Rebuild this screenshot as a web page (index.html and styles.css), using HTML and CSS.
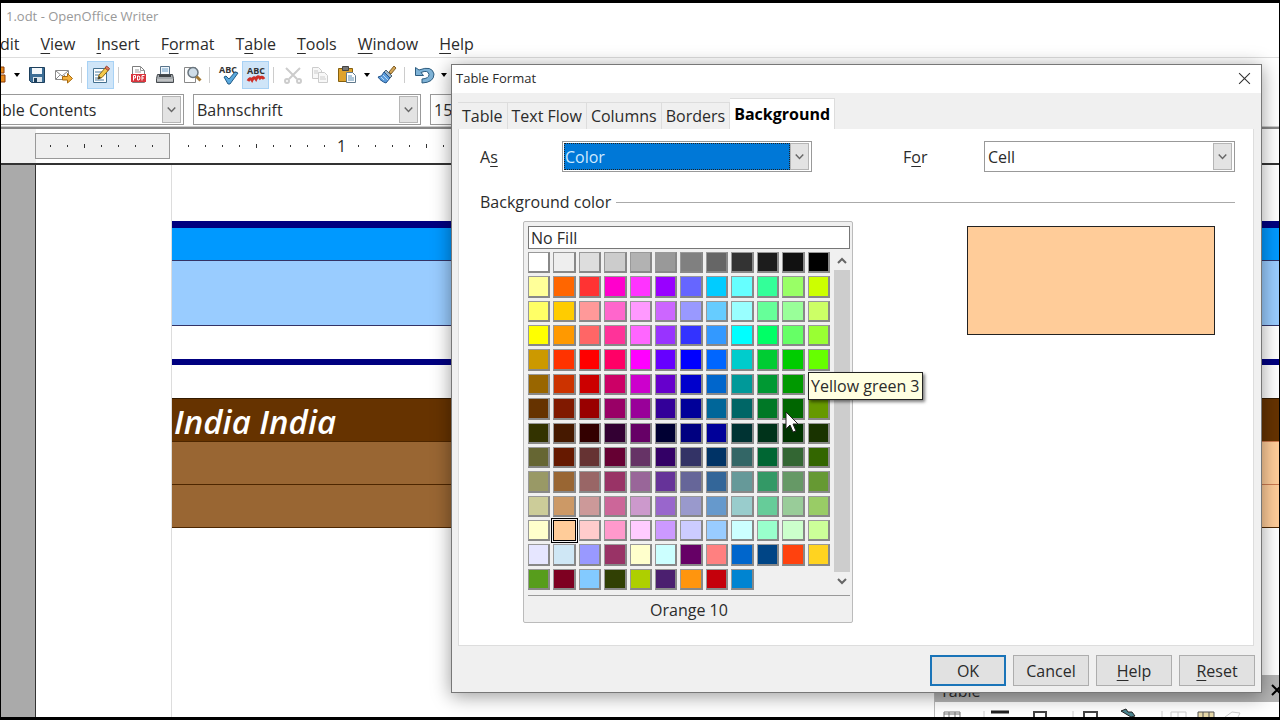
FILE: index.html
```
<!DOCTYPE html>
<html lang="en">
<head>
    <meta charset="UTF-8">
    <title>OpenOffice Writer</title>
    <link rel="stylesheet" href="styles.css">
    <script src="script.js" defer></script>
</head>
<body>
    <header class="titlebar">1.odt - OpenOffice Writer</header>
    <nav class="menubar">
        <a href="#">dit</a>
        <a href="#"><u>V</u>iew</a>
        <a href="#"><u>I</u>nsert</a>
        <a href="#">F<u>o</u>rmat</a>
        <a href="#">T<u>a</u>ble</a>
        <a href="#"><u>T</u>ools</a>
        <a href="#"><u>W</u>indow</a>
        <a href="#"><u>H</u>elp</a>
    </nav>

    <div class="toolbar">
        <button class="tool cut-off" aria-label="Open"><svg viewBox="0 0 9 20"><path d="M-3 2h6v6h-6zM-3 10h7v7h-7z" fill="#e88a1a" stroke="#8a3c0a"/></svg></button>
        <button class="caret" aria-label="Open recent"></button>
        <button class="tool" aria-label="Save"><svg viewBox="0 0 20 20"><path d="M2.500 2.500h15v15h-13l-2-2z" fill="#3d6e96" stroke="#1d3f5c"/><path d="M5 3h10v6H5z" fill="#f4f8fb"/><path d="M6 12h9v5H6z" fill="#dbe5ec"/><path d="M7 13h3v4H7z" fill="#1d3f5c"/></svg></button>
        <button class="tool" aria-label="E-mail document"><svg viewBox="0 0 20 20"><path d="M1.500 5.500h13v9h-13z" fill="#fff" stroke="#8a8a8a"/><path d="M2 6l6 5 6-5M2 14l4-4M14 14l-4-4" fill="none" stroke="#8a8a8a"/><path d="M8.500 11.500h5v-3l5 5-5 4.500v-3h-5z" fill="#f4b13c" stroke="#a8690c"/></svg></button>
        <span class="sep"></span>
        <button class="tool on" aria-label="Edit file"><svg viewBox="0 0 20 20"><path d="M2.500 3.500h13v14h-13z" fill="#fff" stroke="#44708f"/><path d="M4 7h7M4 10h5M4 13h3M4 15h9" stroke="#4a7da1"/><path d="M7 14l1-4 7-8 3 2.500-7 8z" fill="#f3c94b" stroke="#8a6718"/><path d="M14 3l1.500-2 3 2.500-1.500 2z" fill="#e27a63" stroke="#9b4630"/><path d="M7 14l1-3 2 2z" fill="#333"/></svg></button>
        <span class="sep"></span>
        <button class="tool" aria-label="Export as PDF"><svg viewBox="0 0 20 20"><path d="M4.500 1.500h8l4 4v12h-12z" fill="#fff" stroke="#7d7d7d"/><path d="M12.500 1.500v4h4M7 5h4M7 7h6" fill="none" stroke="#999"/><path d="M3 9h15v8H3z" fill="#d9353d"/><path d="M5.500 15.500v-5h2v2.500h-2M9.500 11v4h1.500l.8-1v-2l-.8-1zM14 15.500v-5h2.500M14 13h2" fill="none" stroke="#fff"/></svg></button>
        <button class="tool" aria-label="Print"><svg viewBox="0 0 20 20"><path d="M5.500 1.500h9v8h-9z" fill="#eef5fb" stroke="#58738a"/><path d="M7 4h6M7 6h6" stroke="#6ea0c8"/><path d="M2.500 9.500h15l1 4v4h-17v-4z" fill="#a4a9ad" stroke="#464b4f"/><path d="M4 11h12" stroke="#3d4246" stroke-width="2"/><path d="M2 15h16" stroke="#dadada"/></svg></button>
        <button class="tool" aria-label="Page preview"><svg viewBox="0 0 20 20"><path d="M2.500 2.500h11v15h-11z" fill="#fff" stroke="#888"/><circle cx="11" cy="7.500" r="5" fill="#cfdde8" stroke="#69757e" stroke-width="1.500"/><path d="M14.500 11.500l4 4" stroke="#a57a34" stroke-width="3"/></svg></button>
        <span class="sep"></span>
        <button class="tool" aria-label="Spelling"><svg viewBox="0 0 20 20"><text x="0" y="8" class="abc">ABC</text><path d="M5 12l2-1 3 3 6-7 3 1-8 11h-2z" fill="#5aa9de" stroke="#235b86"/></svg></button>
        <button class="tool on" aria-label="AutoSpellcheck"><svg viewBox="0 0 20 20"><text x="1" y="9" class="abc">ABC</text><path d="M2 16q2-4 4-1 2-4 4-1 2-4 4-1 2-2 4 1" fill="none" stroke="#cf2f27" stroke-width="3"/></svg></button>
        <span class="sep"></span>
        <button class="tool" aria-label="Cut" disabled><svg viewBox="0 0 20 20"><path d="M3 3l11 11M17 3L6 14" stroke="#ccc" stroke-width="2"/><circle cx="4" cy="16" r="2" fill="none" stroke="#ccc" stroke-width="2"/><circle cx="16" cy="16" r="2" fill="none" stroke="#ccc" stroke-width="2"/></svg></button>
        <button class="tool" aria-label="Copy" disabled><svg viewBox="0 0 20 20"><path d="M2.500 2.500h6l3 3v8h-9z" fill="#f8f8f8" stroke="#ccc"/><path d="M8.500 7.500h6l3 3v7h-9z" fill="#f8f8f8" stroke="#ccc"/><path d="M4 6h4M4 8h4M10 12h5M10 14h6" stroke="#ccc"/></svg></button>
        <button class="tool" aria-label="Paste"><svg viewBox="0 0 20 20"><path d="M1.500 3.500h14v13h-14z" fill="#dfa32d" stroke="#85600f"/><path d="M5.500 1.500h6v4h-6z" fill="#777" stroke="#444"/><path d="M9.500 7.500h6l3 3v7h-9z" fill="#fff" stroke="#60798c"/><path d="M11 11h4M11 13h6M11 15h6" stroke="#5d8fb5"/></svg></button>
        <button class="caret" aria-label="Paste special"></button>
        <button class="tool" aria-label="Format paintbrush"><svg viewBox="0 0 20 20"><path d="M12 7l5-6 2 2-5 6z" fill="#d4a657" stroke="#80602a"/><path d="M9 5l6 6-2 2-6-6z" fill="#9db4c5" stroke="#4a6478"/><path d="M7 7l6 6-4 5q-3-1-4-2-2-1-4-4 4 0 6-5z" fill="#5a9bdb" stroke="#22548c"/><path d="M4 12l3 3M6 10l5 5" stroke="#bcdcf7"/></svg></button>
        <span class="sep"></span>
        <button class="tool" aria-label="Undo"><svg viewBox="0 0 20 20"><path d="M1.500 2.500v8h8l-2.500-3q7-3 8 2 0 4-7 4.500v4q12-.5 12-9-2-9-15-4z" fill="#7eb2d6" stroke="#2e5d80"/></svg></button>
        <button class="caret" aria-label="Undo list"></button>
    </div>

    <div class="formatbar">
        <span class="combo style-combo">
            <select aria-label="Paragraph style"><option>ble Contents</option></select>
            <svg class="chevron" viewBox="0 0 18 26"><path d="M5 11l4 4 4-4"/></svg>
        </span>
        <span class="combo font-combo">
            <select aria-label="Font name"><option>Bahnschrift</option></select>
            <svg class="chevron" viewBox="0 0 18 26"><path d="M5 11l4 4 4-4"/></svg>
        </span>
        <span class="combo size-combo">
            <select aria-label="Font size"><option>15</option></select>
        </span>
    </div>

    <div class="ruler">
        <div class="ruler-margin" data-ticks="7" data-tall="2"></div>
        <div class="ruler-page" data-ticks="64" data-tall="4" data-label="9"></div>
    </div>

    <main class="workspace">
        <div class="page">
            <div class="page-body">
                <table class="blue-table">
                    <tr class="head"><td></td><td></td></tr>
                    <tr class="fill"><td></td><td></td></tr>
                    <tr class="foot"><td></td><td></td></tr>
                </table>
                <table class="brown-table">
                    <tr class="head"><td>India India</td><td></td></tr>
                    <tr><td></td><td></td></tr>
                    <tr><td></td><td></td></tr>
                </table>
            </div>
        </div>
    </main>

    <aside class="table-bar">
        <div class="table-bar-title">Table <button aria-label="Close toolbar"><svg viewBox="0 0 12 12"><path d="M1 1l10 10M11 1L1 11"/></svg></button></div>
        <svg class="table-bar-icons" width="344" height="15">
            <path d="M9 15V10h16v5M14 10v5M20 10v5M9 12h16" stroke="#777" fill="none"/>
            <path d="M49 9v6M138 9v6M227 9v6" stroke="#ccc"/>
            <path d="M56 10h18" stroke="#222" stroke-width="3"/>
            <path d="M99 15V10h12v5M149 15V10h13v5" stroke="#444" fill="none" stroke-width="2"/>
            <path d="M186 9l5-2 2 3 4 0 3 4-4 1-5-3z" fill="#4c8590" stroke="#222"/>
            <path d="M236 15V10h15v5M243 10v5M290 15l7-5 8 1-2 4" stroke="#ccc" fill="none"/>
            <path d="M263 10h16v5h-16z" fill="#e8d9a8"/>
            <path d="M263 15V10h16v5M268 10v5M274 10v5" stroke="#555" fill="none"/>
        </svg>
    </aside>

    <section class="dialog" role="dialog" aria-label="Table Format">
        <div class="dialog-title">
            <span>Table Format</span>
            <button aria-label="Close"><svg viewBox="0 0 12 12"><path d="M1 1l10 10M11 1L1 11"/></svg></button>
        </div>
        <div class="tabs">
            <button>Table</button>
            <button>Text Flow</button>
            <button>Columns</button>
            <button>Borders</button>
            <button class="active">Background</button>
        </div>
        <div class="panel">
            <div class="fields">
                <label for="as">A<u>s</u></label>
                <span class="combo focused">
                    <select id="as"><option>Color</option></select>
                    <svg class="chevron" viewBox="0 0 18 26"><path d="M5 11l4 4 4-4"/></svg>
                </span>
                <label for="for" class="for-label">F<u>o</u>r</label>
                <span class="combo">
                    <select id="for"><option>Cell</option></select>
                    <svg class="chevron" viewBox="0 0 18 26"><path d="M5 11l4 4 4-4"/></svg>
                </span>
            </div>
            <h2>Background color</h2>
            <div class="color-area">
                <div class="palette">
                    <button class="no-fill">No Fill</button>
                    <div class="palette-main">
                        <div class="swatches" id="swatches"></div>
                        <div class="scrollbar">
                            <svg viewBox="0 0 16 18"><path d="M4 11l4-4 4 4"/></svg>
                            <svg viewBox="0 0 16 18"><path d="M4 7l4 4 4-4"/></svg>
                        </div>
                    </div>
                    <div class="color-name">Orange 10</div>
                    <div class="tooltip" role="tooltip">Yellow green 3</div>
                    <svg class="pointer" viewBox="0 0 14 22"><path d="M1 1v17l4-4 3 7 3-1-3-7h5z"/></svg>
                </div>
                <div class="preview"></div>
            </div>
        </div>
        <div class="actions">
            <button class="default">OK</button>
            <button>Cancel</button>
            <button><u>H</u>elp</button>
            <button><u>R</u>eset</button>
        </div>
    </section>
</body>
</html>
```
FILE: styles.css
```
* {
    box-sizing: border-box;
}
body {
    display: flex;
    flex-direction: column;
    position: relative;
    height: 100vh;
    margin: 0;
    overflow: hidden;
    border: solid #000;
    border-width: 3px 1px;
    background: #fff;
    color: #2b2b2b;
    font-family: "Open Sans", "Noto Sans", sans-serif;
    font-size: 16px;
    line-height: 20px;
}
button, select {
    margin: 0;
    padding: 0;
    border: none;
    border-radius: 0;
    background: none;
    color: inherit;
    font: inherit;
}
u {
    text-underline-offset: 3px;
}

/* main window bars */
.titlebar {
    flex: none;
    height: 25px;
    padding: 3px 5px;
    color: #999;
    font-size: 13px;
}
.menubar {
    display: flex;
    flex: none;
    gap: 21px;
    height: 29px;
    padding-top: 6px;
}
.menubar a {
    color: inherit;
    text-decoration: none;
}
.menubar a:first-child {
    margin-left: -1px;
}
.toolbar {
    display: flex;
    flex: none;
    align-items: center;
    height: 35px;
    padding-bottom: 1px;
    border-top: 1px solid #ddd;
}
.tool {
    display: flex;
    align-items: center;
    justify-content: center;
    width: 27px;
    height: 28px;
}
.tool svg {
    width: 20px;
    height: 20px;
    overflow: visible;
}
.tool.cut-off {
    width: 9px;
}
.tool.cut-off svg {
    width: 9px;
}
.tool.on {
    border: 1px solid #a8d2f5;
    background: #cfe5f8;
}
.abc {
    fill: #333;
    font-size: 9px;
    font-weight: bold;
}
.caret {
    width: 13px;
    height: 28px;
}
.caret::before {
    content: "";
    display: block;
    width: 0;
    margin: 0 auto;
    border: 3px solid transparent;
    border-top: 4px solid #000;
    border-bottom: none;
}
.sep {
    width: 1px;
    height: 16px;
    margin: 0 5px 0 4px;
    background: #ccc;
}
.formatbar {
    display: flex;
    flex: none;
    gap: 9px;
    height: 35px;
    padding-top: 2px;
    border-bottom: 1px solid #ccc;
}
.combo {
    display: flex;
    position: relative;
    height: 31px;
    border: 1px solid #999;
    background: #fff;
}
.combo select {
    flex: 1;
    padding-left: 3px;
    appearance: none;
    outline: none;
}
.chevron {
    position: absolute;
    top: 1px;
    right: 2px;
    width: 19px;
    height: 27px;
    border: 1px solid #b5b5b5;
    background: #e3e3e3;
    pointer-events: none;
}
.chevron path, .scrollbar path {
    fill: none;
    stroke: #666;
    stroke-width: 1.5;
}
.scrollbar path {
    stroke-width: 2;
}
.style-combo {
    width: 183px;
    border-left: none;
}
.style-combo select {
    padding-left: 1px;
}
.font-combo {
    width: 228px;
}
.size-combo {
    width: 80px;
}

/* ruler */
.ruler {
    display: flex;
    flex: none;
    align-items: center;
    height: 38px;
    padding-left: 34px;
    border-top: 2px solid #888;
    border-bottom: 2px solid #333;
    background: linear-gradient(to right, #f0f0f0 35px, #fff 35px);
}
.ruler-margin, .ruler-page {
    display: flex;
    align-items: center;
    height: 26px;
}
.ruler-margin {
    width: 135px;
    padding-left: 6px;
    border: 1px solid #999;
    background: #f0f0f0;
}
.ruler-page {
    flex: 1;
    padding-left: 10px;
    overflow: hidden;
}
.tick {
    flex: none;
    width: 17px;
    text-align: center;
}
.tick::before {
    content: "";
    display: block;
    width: 1px;
    height: 2px;
    margin: 0 auto;
    background: #333;
}
.tick.tall::before {
    height: 4px;
}
.tick.label::before {
    display: none;
}

/* document */
.workspace {
    flex: 1;
    padding-left: 34px;
    background: #aaa;
}
.page {
    height: 100%;
    padding-left: 135px;
    border-left: 1px solid #333;
    background: #fff;
}
.page-body {
    height: 100%;
    padding-top: 56px;
    border-left: 1px solid #ddd;
}
.page-body table {
    width: 100%;
    border-spacing: 0;
    table-layout: fixed;
}
.page-body td {
    padding: 0;
    border-top: 1px solid #333366;
}
.blue-table .head td {
    height: 39px;
    border-top: 7px solid #000080;
    background: #0099ff;
}
.blue-table .fill td {
    height: 65px;
    background: #99ccff;
}
.blue-table .foot td {
    height: 40px;
    border-bottom: 6px solid #000080;
}
.brown-table {
    margin-top: 33px;
    border-bottom: 1px solid #4d2600;
}
.brown-table td {
    height: 43px;
    border-top: 1px solid #4d2600;
    background: #996633;
}
.brown-table td:last-child {
    border-color: #cc7a50;
    background: #ffcc99;
}
.brown-table .head td {
    padding: 4px 0 0 2px;
    border-color: #331a00;
    background: #663300;
    color: #fff;
    font-size: 33px;
    font-style: italic;
    font-weight: 600;
    line-height: 38px;
}

/* floating table toolbar */
.table-bar {
    position: absolute;
    right: 0;
    bottom: 0;
    width: 345px;
    border-left: 1px solid #bbb;
    background: #fff;
}
.table-bar-title {
    display: flex;
    align-items: center;
    justify-content: space-between;
    height: 27px;
    padding: 4px 0 0 5px;
    overflow: hidden;
    background: #b4b4b4;
    line-height: 16px;
}
.table-bar-title button {
    height: 20px;
    margin: -2px -4px 0 0;
}
.table-bar-title svg {
    width: 12px;
    height: 12px;
    stroke: #000;
    stroke-width: 2;
}
.table-bar-icons {
    display: block;
}

/* dialog */
.dialog {
    display: flex;
    flex-direction: column;
    position: absolute;
    top: 61px;
    right: 17px;
    bottom: 24px;
    left: 450px;
    border: 1px solid #777;
    background: #f0f0f0;
    box-shadow: 0 3px 18px rgba(0, 0, 0, 0.4);
}
.dialog-title {
    display: flex;
    align-items: center;
    justify-content: space-between;
    height: 28px;
    padding: 0 10px 2px 4px;
    background: #fff;
    font-size: 13px;
}
.dialog-title svg {
    display: block;
    width: 13px;
    height: 13px;
    stroke: #333;
}
.tabs {
    display: flex;
    align-items: flex-end;
    height: 36px;
    padding-left: 6px;
}
.tabs button {
    height: 27px;
    padding: 0 4px;
    border: 1px solid #ddd;
    border-width: 1px 1px 0 0;
}
.tabs .active {
    height: 31px;
    background: #fff;
    color: #000;
    font-weight: bold;
}
.panel {
    flex: 1;
    margin: 0 7px 0 6px;
    padding: 12px 18px 0 21px;
    border: 1px solid #ddd;
    border-top: none;
    background: #fff;
}
.fields {
    display: grid;
    grid-template-columns: 82px 250px 1fr 251px;
    align-items: center;
}
.for-label {
    padding-left: 91px;
}
.combo.focused select {
    margin: 1px 21px 1px 1px;
    padding-left: 1px;
    outline: 1px dotted #222;
    outline-offset: -1px;
    background: #0078d7;
    color: #cfeaff;
}
.panel h2 {
    display: flex;
    align-items: center;
    gap: 5px;
    margin: 20px 0 9px;
    font-size: 16px;
    font-weight: normal;
}
.panel h2::after {
    content: "";
    flex: 1;
    height: 1px;
    background: #aaa;
}
.color-area {
    display: flex;
    align-items: flex-start;
    justify-content: space-between;
    padding: 0 20px 0 43px;
}
.palette {
    position: relative;
    width: 330px;
    padding: 4px 2px 0 4px;
    border: 1px solid #bbb;
    border-radius: 2px;
    background: #f0f0f0;
}
.no-fill {
    display: block;
    width: 100%;
    height: 23px;
    padding-left: 2px;
    border: 1px solid #777;
    background: #fff;
    text-align: left;
}
.palette-main {
    display: flex;
    gap: 4px;
    margin-top: 3px;
    padding-bottom: 5px;
    border-bottom: 1px solid #999;
}
.swatches {
    display: grid;
    flex: 1;
    grid-template-columns: repeat(12, 1fr);
    grid-template-rows: repeat(14, 1fr);
    gap: 3px;
    height: 338px;
}
.swatches button {
    border: 1px solid #999;
    border-right: 2px solid #888;
    border-bottom: 2px solid #888;
}
.swatches .selected {
    border: 1px solid #000;
    outline: 1px solid #000;
    outline-offset: 1px;
}
.scrollbar {
    display: flex;
    flex-direction: column;
    justify-content: space-between;
    width: 16px;
    background: #cdcdcd;
}
.scrollbar svg {
    width: 16px;
    height: 18px;
    background: #f0f0f0;
}
.color-name {
    padding: 4px 0 2px;
    text-align: center;
}
.tooltip {
    position: absolute;
    top: 150px;
    left: 284px;
    padding: 3px 2px;
    border: 1px solid #222;
    background: #ffffe1;
    box-shadow: 2px 2px 3px rgba(0, 0, 0, 0.5);
    white-space: nowrap;
}
.pointer {
    position: absolute;
    top: 189px;
    left: 261px;
    width: 14px;
    height: 22px;
    fill: #fff;
    stroke: #222;
}
.preview {
    width: 248px;
    height: 109px;
    margin-top: 5px;
    border: 1px solid #222;
    background: #ffcc99;
}
.actions {
    display: flex;
    justify-content: flex-end;
    gap: 7px;
    padding: 9px 6px 6px;
}
.actions button {
    width: 76px;
    height: 31px;
    border: 1px solid #adadad;
    background: #e1e1e1;
}
.actions .default {
    border: 2px solid #1a74b8;
}
```
FILE: script.js
```
const palette = [
    'ffffff eeeeee dddddd cccccc b2b2b2 999999 808080 666666 333333 1c1c1c 111111 000000',
    'ffff99 ff6600 ff3333 ff00cc ff33ff 9900ff 6666ff 00ccff 66ffff 33ff99 99ff66 ccff00',
    'ffff66 ffcc00 ff9999 ff66cc ff99ff cc66ff 9999ff 66ccff 99ffff 66ff99 99ff99 ccff66',
    'ffff00 ff9900 ff6666 ff3399 ff66ff 9933ff 3333ff 3399ff 00ffff 00ff66 66ff66 99ff33',
    'cc9900 ff3300 ff0000 ff0066 ff00ff 6600ff 0000ff 0066ff 00cccc 00cc33 00cc00 66ff00',
    '996600 cc3300 cc0000 cc0066 cc00cc 6600cc 0000cc 0066cc 009999 009933 009900 66cc00',
    '663300 801900 990000 990066 990099 330099 000099 006699 006666 007826 006600 669900',
    '333300 461900 330000 330033 660066 000033 000080 000099 003333 00331a 003300 193300',
    '666633 661900 663333 660033 663366 330066 333366 003366 336666 006633 336633 336600',
    '999966 996633 996666 993366 996699 663399 666699 336699 669999 339966 669966 669933',
    'cccc99 cc9966 cc9999 cc6699 cc99cc 9966cc 9999cc 6699cc 99cccc 66cc99 99cc99 99cc66',
    'ffffcc ffcc99 ffcccc ff99cc ffccff cc99ff ccccff 99ccff ccffff 99ffcc ccffcc ccff99',
    'e6e6ff cfe7f5 9999ff 993366 ffffcc ccffff 660066 ff8080 0066cc 004586 ff420e ffd320',
    '579d1c 7e0021 83caff 314004 aecf00 4b1f6f ff950e c5000b 0084d1'
];

const swatches = document.getElementById('swatches');
palette.join(' ').split(' ').forEach(color => {
    const button = document.createElement('button');
    button.style.backgroundColor = '#' + color;
    button.setAttribute('aria-label', '#' + color);
    if (color === 'ffcc99') {
        button.classList.add('selected');
    }
    swatches.appendChild(button);
});

document.querySelectorAll('[data-ticks]').forEach(strip => {
    const tall = Number(strip.dataset.tall);
    const label = Number(strip.dataset.label);
    for (let i = 0; i < Number(strip.dataset.ticks); i++) {
        const tick = document.createElement('span');
        tick.className = 'tick';
        if (label && i % 10 === 9) {
            tick.classList.add('label');
            tick.textContent = (i + 1) / 10;
        } else if (i % 10 === tall) {
            tick.classList.add('tall');
        }
        strip.appendChild(tick);
    }
});
```
